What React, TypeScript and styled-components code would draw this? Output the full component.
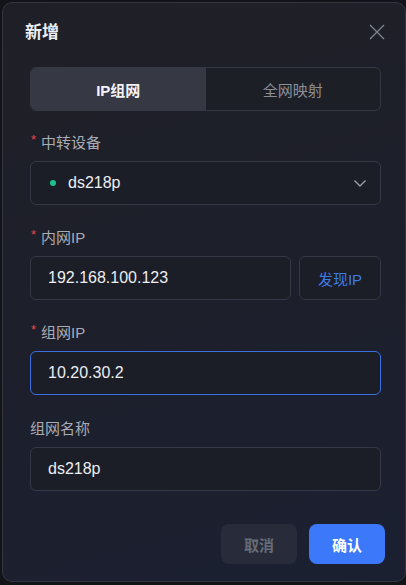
import styled, { createGlobalStyle } from "styled-components";

const GlobalStyle = createGlobalStyle`
  html, body {
    margin: 0;
    padding: 0;
    background: #13141a;
    font-family: "Liberation Sans", "Noto Sans CJK SC", sans-serif;
  }
`;

const fields = {
  device: "ds218p",
  lanIp: "192.168.100.123",
  netIp: "10.20.30.2",
  name: "ds218p",
};

export default function App() {
  return (
    <>
      <GlobalStyle />
      <Dialog>
        <Header>
          <Title>新增</Title>
          <CloseButton aria-label="close">
            <svg width="16" height="16" viewBox="0 0 16 16">
              <path d="M1 1L15 15M15 1L1 15" stroke="#7d818c" strokeWidth="1.4" />
            </svg>
          </CloseButton>
        </Header>

        <Body>
          <Tabs>
            <Tab $active>IP组网</Tab>
            <Tab>全网映射</Tab>
          </Tabs>

          <Field>
            <Label $required>中转设备</Label>
            <SelectBox>
              <Dot />
              <Value>{fields.device}</Value>
              <Chevron width="16" height="16" viewBox="0 0 16 16">
                <path d="M2.5 5.5L8 11L13.5 5.5" fill="none" stroke="#9a9ea8" strokeWidth="1.4" />
              </Chevron>
            </SelectBox>
          </Field>

          <Field>
            <Label $required>内网IP</Label>
            <InputRow>
              <Input $grow>
                <Value>{fields.lanIp}</Value>
              </Input>
              <LinkButton>发现IP</LinkButton>
            </InputRow>
          </Field>

          <Field $spacing={24}>
            <Label $required>组网IP</Label>
            <Input $focused>
              <Value>{fields.netIp}</Value>
            </Input>
          </Field>

          <Field>
            <Label>组网名称</Label>
            <Input>
              <Value>{fields.name}</Value>
            </Input>
          </Field>
        </Body>

        <Footer>
          <Button>取消</Button>
          <Button $primary>确认</Button>
        </Footer>
      </Dialog>
    </>
  );
}

const Dialog = styled.div`
  margin: 2px 0 0 2px;
  width: 404px;
  height: 580px;
  box-sizing: border-box;
  border: 1px solid #33363f;
  border-radius: 10px;
  background: linear-gradient(165deg, #1f2027 0%, #1d1f2a 45%, #1b2031 100%);
  display: flex;
  flex-direction: column;
`;

const Header = styled.div`
  display: flex;
  align-items: center;
  justify-content: space-between;
  padding: 18px 20px 0 22px;
  height: 24px;
`;

const Title = styled.h2`
  margin: 0;
  font-size: 17px;
  font-weight: 700;
  color: #eceef2;
  line-height: 24px;
`;

const CloseButton = styled.button`
  border: 0;
  background: none;
  padding: 0;
  display: flex;
  margin-top: -3px;
`;

const Body = styled.div`
  padding: 22px 24px 0 27px;
  display: flex;
  flex-direction: column;
`;

const Tabs = styled.div`
  display: grid;
  grid-template-columns: 1fr 1fr;
  height: 44px;
  box-sizing: border-box;
  border: 1px solid #353843;
  border-radius: 6px;
  overflow: hidden;
  background: #1d1f27;
  margin-bottom: 22px;
`;

const Tab = styled.div<{ $active?: boolean }>`
  display: flex;
  align-items: center;
  justify-content: center;
  font-size: 15px;
  font-weight: ${(p) => (p.$active ? 700 : 400)};
  color: ${(p) => (p.$active ? "#f2f3f6" : "#8a8e98")};
  background: ${(p) => (p.$active ? "#363944" : "transparent")};
`;

const Field = styled.div<{ $spacing?: number }>`
  display: flex;
  flex-direction: column;
  margin-bottom: ${(p) => p.$spacing ?? 23}px;
`;

const Label = styled.label<{ $required?: boolean }>`
  font-size: 15px;
  line-height: 20px;
  color: #a9acb5;
  margin-bottom: 8px;
  display: flex;
  align-items: center;

  &::before {
    content: ${(p) => (p.$required ? '"*"' : "none")};
    color: #e5484d;
    font-size: 13px;
    margin-right: 5px;
    margin-left: 1px;
    margin-top: -6px;
  }
`;

const boxBase = `
  height: 44px;
  box-sizing: border-box;
  border-radius: 6px;
  display: flex;
  align-items: center;
  background: #1b1d27;
`;

const SelectBox = styled.div`
  ${boxBase}
  border: 1px solid #363945;
  padding: 0 12px 0 19px;
`;

const Dot = styled.span`
  width: 6px;
  height: 6px;
  border-radius: 50%;
  background: #1cc18b;
  margin-right: 12px;
`;

const Chevron = styled.svg`
  margin-left: auto;
`;

const InputRow = styled.div`
  display: flex;
  gap: 8px;
`;

const Input = styled.div<{ $focused?: boolean; $grow?: boolean }>`
  ${boxBase}
  flex: ${(p) => (p.$grow ? 1 : "none")};
  border: 1px solid ${(p) => (p.$focused ? "#3a6fe0" : "#363945")};
  padding: 0 17px;
`;

const Value = styled.span`
  font-size: 16px;
  color: #eceef2;
`;

const LinkButton = styled.button`
  ${boxBase}
  width: 82px;
  justify-content: center;
  border: 1px solid #363945;
  color: #3d7ce8;
  font-size: 15px;
  font-family: inherit;
`;

const Footer = styled.div`
  display: flex;
  justify-content: flex-end;
  gap: 12px;
  padding: 10px 20px 0 0;
`;

const Button = styled.button<{ $primary?: boolean }>`
  width: 76px;
  height: 40px;
  border: 0;
  border-radius: 8px;
  font-family: inherit;
  font-size: 15px;
  font-weight: 700;
  background: ${(p) => (p.$primary ? "#3b78fa" : "#282c3a")};
  color: ${(p) => (p.$primary ? "#ffffff" : "#666b78")};
`;
